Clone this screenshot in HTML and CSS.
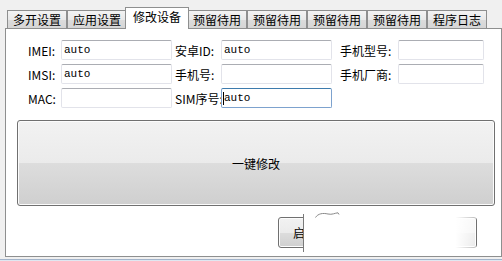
FILE: index.html
```html
<!DOCTYPE html>
<html>
<head>
<meta charset="utf-8">
<link rel="stylesheet" href="styles.css">
</head>
<body>
<div class="win">
  <div class="tabs">
    <div class="tab">多开设置</div>
    <div class="tab">应用设置</div>
    <div class="tab active">修改设备</div>
    <div class="tab">预留待用</div>
    <div class="tab">预留待用</div>
    <div class="tab">预留待用</div>
    <div class="tab">预留待用</div>
    <div class="tab">程序日志</div>
  </div>
  <div class="panel">
    <div class="form">
      <label class="lbl">IMEI:</label>
      <div class="field">auto</div>
      <label class="lbl l2">安卓ID:</label>
      <div class="field">auto</div>
      <label class="lbl l3">手机型号:</label>
      <div class="field"></div>

      <label class="lbl">IMSI:</label>
      <div class="field">auto</div>
      <label class="lbl l2">手机号:</label>
      <div class="field"></div>
      <label class="lbl l3">手机厂商:</label>
      <div class="field"></div>

      <label class="lbl">MAC:</label>
      <div class="field"></div>
      <label class="lbl l2">SIM序号:</label>
      <div class="field focus"><span class="caret"></span>auto</div>
    </div>
    <div class="big-row">
      <div class="btn big">一键修改</div>
    </div>
    <div class="actions">
      <div class="start-wrap">
        <div class="btn start">启动</div>
        <div class="mask"></div>
        <svg class="curl" width="28" height="6" viewBox="0 0 28 6"><path d="M0.5 5.5 C3 1.5 8 0.8 13 2 C17 3 20 1 23 0.8 L24 2.5" fill="none" stroke="#8a8a8a" stroke-width="1"/></svg>
      </div>
    </div>
  </div>
  <div class="status"></div>
</div>
</body>
</html>
```

FILE: styles.css
```css
html, body {
  margin: 0;
  padding: 0;
  background: #f0f0f0;
}
body {
  width: 502px;
  height: 261px;
  overflow: hidden;
  font-family: "Noto Sans CJK SC", "Liberation Sans", sans-serif;
  font-size: 12px;
  color: #000;
}
.win {
  display: flex;
  flex-direction: column;
}
.tabs {
  display: flex;
  align-items: flex-end;
  height: 29px;
  margin-bottom: -1px;
  padding-left: 7px;
  position: relative;
  z-index: 1;
}
.tab {
  box-sizing: border-box;
  width: 60px;
  height: 18px;
  margin-bottom: 1px;
  border: 1px solid #8e8f8f;
  border-bottom: none;
  background: linear-gradient(#f3f3f3, #e9e9e9 50%, #dcdcdc 51%, #d6d6d6);
  display: flex;
  align-items: center;
  justify-content: center;
  line-height: 14px;
  padding-top: 1px;
}
.tab.active {
  width: 64px;
  height: 22px;
  margin: 0 -2px 0 -2px;
  background: #fff;
  position: relative;
  z-index: 2;
  align-items: flex-start;
  padding-top: 2px;
}
.panel {
  box-sizing: border-box;
  width: 497px;
  height: 229px;
  margin-left: 5px;
  border: 1px solid #8e8f8f;
  background: #fff;
  padding-top: 11px;
  display: flex;
  flex-direction: column;
}
.form {
  display: grid;
  grid-template-columns: 33px 111px 49px 111px 66px 86px;
  grid-auto-rows: 20px;
  row-gap: 4px;
  padding-left: 22px;
}
.lbl {
  display: flex;
  align-items: center;
  line-height: 14px;
  white-space: nowrap;
  padding-top: 1px;
}
.lbl.l2 { padding-left: 3px; }
.lbl.l3 { padding-left: 8px; }
.field {
  box-sizing: border-box;
  height: 20px;
  border: 1px solid #e2e3ea;
  border-top-color: #abadb3;
  border-radius: 2px;
  background: #fff;
  font-family: "Liberation Mono", "DejaVu Sans Mono", monospace;
  font-size: 11px;
  line-height: 17px;
  padding-left: 2px;
  display: flex;
  align-items: center;
}
.field.focus {
  border-color: #7da2ce;
  border-top-color: #3d7bad;
  padding-left: 1px;
}
.caret {
  width: 1px;
  height: 13px;
  background: #000;
}
.big-row {
  padding: 12px 0 0 11px;
}
.btn {
  box-sizing: border-box;
  border: 1px solid #707070;
  border-radius: 3px;
  box-shadow: inset 0 0 0 1px #fcfcfc;
  background: linear-gradient(#f2f2f2, #ebebeb 50%, #dddddd 50%, #cfcfcf);
  display: flex;
  align-items: center;
}
.big {
  width: 478px;
  height: 86px;
  justify-content: center;
  line-height: 14px;
  padding-top: 1px;
}
.actions {
  display: flex;
  justify-content: flex-end;
  padding: 11px 24px 0 0;
}
.start-wrap {
  position: relative;
  width: 199px;
  height: 31px;
}
.start {
  width: 199px;
  height: 31px;
  padding-left: 14px;
  line-height: 14px;
}
.mask {
  position: absolute;
  left: 25px;
  top: -3px;
  width: 172px;
  height: 38px;
  background: linear-gradient(to right, #fff 88%, rgba(255,255,255,0.55));
  border-left: 1px solid #7a7a7a;
}
.curl {
  position: absolute;
  left: 37px;
  top: -5px;
}
.status {
  margin-top: 2px;
  height: 2px;
  border-top: 1px solid #a3b4ca;
  background: #dfe7f1;
}
```
